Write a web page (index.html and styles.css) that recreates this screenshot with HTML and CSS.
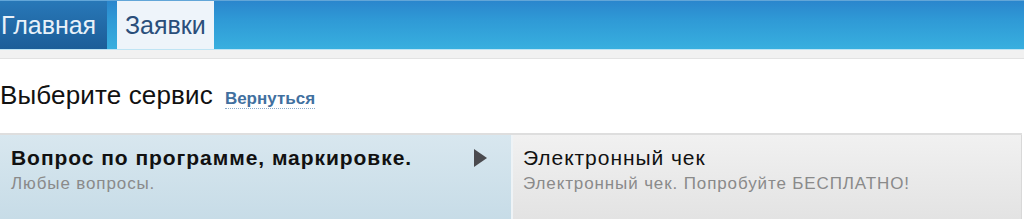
FILE: index.html
```html
<!DOCTYPE html>
<html lang="ru">
<head>
<meta charset="utf-8">
<title>Заявки</title>
<link rel="stylesheet" href="styles.css">
</head>
<body>
<header class="topbar">
  <nav class="tabs">
    <a class="tab tab-dark" href="#">Главная</a>
    <a class="tab tab-active" href="#">Заявки</a>
  </nav>
</header>
<div class="substrip"></div>
<main class="content">
  <div class="heading">
    <h1 class="title">Выберите сервис</h1>
    <a class="back" href="#">Вернуться</a>
  </div>
  <div class="services">
    <a class="card card-selected" href="#">
      <div class="card-text">
        <div class="card-title bold">Вопрос по программе, маркировке.</div>
        <div class="card-sub">Любые вопросы.</div>
      </div>
      <span class="arrow"></span>
    </a>
    <a class="card card-plain" href="#">
      <div class="card-text">
        <div class="card-title">Электронный чек</div>
        <div class="card-sub">Электронный чек. Попробуйте БЕСПЛАТНО!</div>
      </div>
    </a>
  </div>
</main>
</body>
</html>
```
FILE: styles.css
```css
* { box-sizing: border-box; }
html, body { margin: 0; padding: 0; background: #fff; }
body { font-family: "Liberation Sans", Arial, sans-serif; color: #111; width: 1024px; overflow: hidden; }
a { text-decoration: none; }

.topbar {
  height: 50px;
  background: linear-gradient(#2a86cd 0%, #2f9ad6 40%, #38afdf 100%);
  border-top: 1px solid #62a6d8;
  border-bottom: 1px solid #bfe4f4;
}
.tabs { display: flex; height: 48px; }
.tab {
  display: flex; align-items: center;
  font-size: 25px; height: 48px; padding-top: 1px;
}
.tab-dark {
  width: 107px; padding-left: 1px;
  color: #e8f1f9;
  background: linear-gradient(#2878b8, #1c5d98);
}
.tab-active {
  margin-left: 10px; width: 97px; padding-left: 8px;
  color: #2a4e7a;
  background: #eef4fa;
}
.substrip { height: 9px; background: #f1f1f1; border-bottom: 1px solid #e2e2e2; }

.heading { display: flex; align-items: baseline; gap: 12px; height: 74px; padding-top: 20px; }
.title { margin: 0; font-size: 26px; line-height: 32px; font-weight: normal; color: #111; letter-spacing: 0.15px; }
.back {
  font-size: 17px; font-weight: bold; color: #41709f;
  border-bottom: 1px dotted #8aabc9; line-height: 19px;
}

.services {
  display: flex; width: 1022px;
  border-top: 2px solid #dedede;
}
.card {
  display: flex; justify-content: space-between; align-items: flex-start;
  height: 84px; padding: 11px 11px 0 11px;
  color: #111;
}
.card-selected {
  width: 513px;
  background: linear-gradient(#d8e7ef, #c7dce7);
  border-right: 2px solid #eef3f6;
  padding-right: 24px;
}
.card-plain {
  width: 509px;
  background: linear-gradient(#f1f1f1, #e3e3e3);
  border-right: 1px solid #d8d8d8;
  padding-left: 10px;
}
.card-title { font-size: 21px; line-height: 24px; color: #111; letter-spacing: 0.95px; }
.card-title.bold { font-weight: bold; letter-spacing: 0.95px; }
.card-sub { font-size: 17px; line-height: 22px; color: #8a8a8a; margin-top: 3px; letter-spacing: 0.88px; }
.arrow {
  width: 0; height: 0; margin-top: 3px;
  border-top: 9px solid transparent;
  border-bottom: 9px solid transparent;
  border-left: 13px solid #4a4a4e;
}
```
